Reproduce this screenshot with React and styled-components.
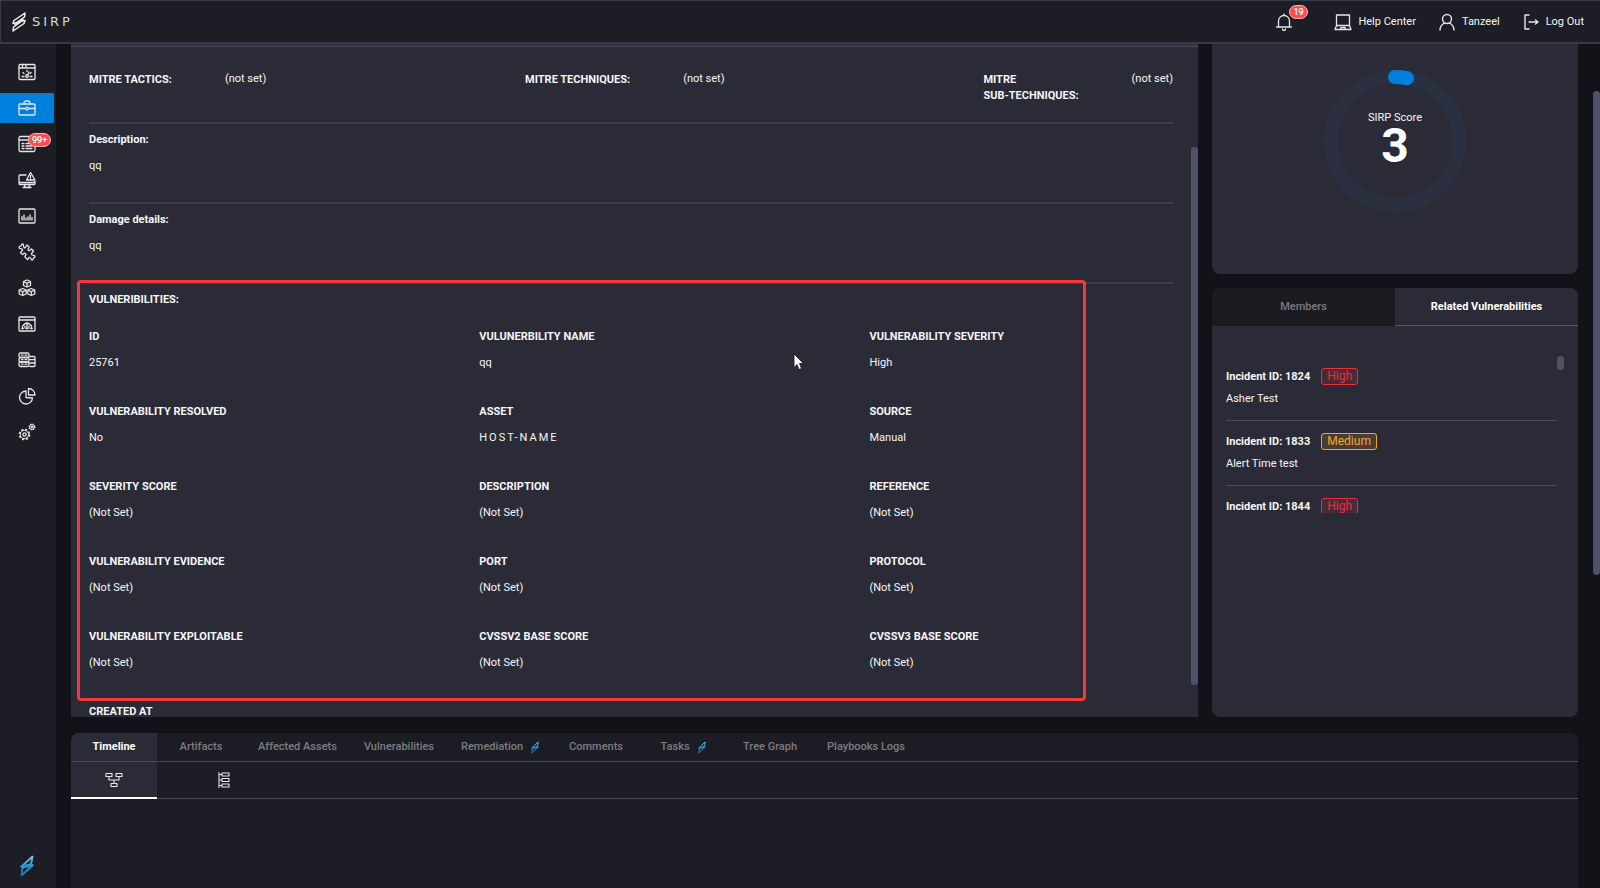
import React, { useState } from 'react';
import styled, { createGlobalStyle } from 'styled-components';

const GlobalStyle = createGlobalStyle`
  * {
    box-sizing: border-box;
  }
  body {
    margin: 0;
    background: #121318;
    color: #f6f6f8;
    font-family: Roboto, "Liberation Sans", sans-serif;
    font-size: 11px;
    line-height: 16px;
    overflow: hidden;
  }
  button {
    font: inherit;
    color: inherit;
    background: none;
    border: 0;
    padding: 0;
    cursor: pointer;
  }
  a {
    color: inherit;
    text-decoration: none;
  }
  h2, h3, p, dl, dd, ul {
    margin: 0;
    padding: 0;
  }
`;

const Page = styled.div`
  display: flex;
  flex-direction: column;
  height: 100vh;
`;

const Header = styled.header`
  display: flex;
  align-items: center;
  justify-content: space-between;
  height: 44px;
  padding: 0 16px 0 11px;
  background: #1c1d25;
  border: 1px solid #3a3a46;
  border-bottom-width: 2px;
  border-right: 0;
`;

const Brand = styled.a`
  display: flex;
  align-items: center;
  gap: 6px;
  font-family: "DejaVu Sans", sans-serif;
  font-size: 13px;
  letter-spacing: 3px;
  color: #d6d6da;
`;

const HeaderNav = styled.nav`
  display: flex;
  align-items: center;
  gap: 22px;
`;

const HeaderLink = styled.a`
  position: relative;
  display: flex;
  align-items: center;
  gap: 6px;
`;

const Bell = styled(HeaderLink)`
  margin-right: 19px;
`;

const Badge = styled.span`
  position: absolute;
  top: ${props => props.$top}px;
  left: ${props => props.$left}px;
  padding: 0 3px;
  border: 1px solid #ffb3b3;
  border-radius: 8px;
  background: #ff4d4f;
  color: #fff;
  font-size: 9px;
  font-weight: 500;
  line-height: 12px;
`;

const Body = styled.div`
  display: flex;
  flex: 1;
  min-height: 0;
`;

const Sidebar = styled.nav`
  display: flex;
  flex-direction: column;
  flex: none;
  width: 56px;
  padding: 13px 2px 11px 0;
  background: #1c1d25;
`;

const SideLink = styled.a`
  position: relative;
  display: flex;
  align-items: center;
  justify-content: center;
  height: 30px;
  margin-bottom: 6px;
  background: ${props => (props.$active ? '#0080dc' : 'transparent')};
`;

const SideFooter = styled.a`
  display: flex;
  justify-content: center;
  margin-top: auto;
`;

const Content = styled.main`
  display: flex;
  flex-direction: column;
  flex: 1;
  min-width: 0;
  gap: 16px;
  padding: 0 15px;
`;

const Columns = styled.div`
  display: flex;
  gap: 14px;
  height: 673px;
`;

const Details = styled.section`
  display: flex;
  flex: 1;
  min-width: 0;
  background: #2b2b37;
  border-top: 2px solid #353443;
  box-shadow: inset 0 1px #4a495d;
  overflow: hidden;
`;

const DetailsBody = styled.div`
  flex: 1;
  min-width: 0;
  padding: 0 18px;
`;

const ScrollThumb = styled.div`
  flex: none;
  width: 7px;
  height: ${props => props.$height}px;
  margin-top: ${props => props.$top}px;
  border-radius: 4px;
  background: #51506a;
`;

const MitreRow = styled.dl`
  display: flex;
  justify-content: space-between;
  height: 78px;
  padding-top: 25px;
  border-bottom: 2px solid #3c3b4b;
`;

const MitreItem = styled.div`
  display: flex;
  gap: 53px;
`;

const Term = styled.dt`
  padding-top: 1px;
  font-weight: 700;
`;

const Value = styled.dd`
  white-space: nowrap;
`;

const TextBlock = styled.section`
  height: 80px;
  padding-top: 8px;
  border-bottom: 2px solid #3c3b4b;
`;

const BlockTitle = styled.h3`
  margin-bottom: 10px;
  font-size: 11px;
  line-height: 16px;
  font-weight: 700;
`;

const Vulnerabilities = styled.section`
  position: relative;
  padding-top: 8px;
`;

const Highlight = styled.div`
  position: absolute;
  inset: -4px 87px auto -12px;
  height: 421px;
  border: 3px solid #f23a3a;
  border-radius: 4px;
  pointer-events: none;
`;

const FieldsTitle = styled.h2`
  margin-bottom: 21px;
  font-size: 11px;
  line-height: 16px;
  font-weight: 700;
`;

const Fields = styled.dl`
  display: grid;
  grid-template-columns: 36% 36% 28%;
  grid-auto-rows: 75px;
`;

const FieldTerm = styled.dt`
  margin-bottom: 10px;
  font-weight: 700;
`;

const FieldValue = styled.dd`
  letter-spacing: ${props => (props.$spaced ? '2px' : 'normal')};
`;

const Pointer = styled.svg`
  position: absolute;
  top: 69px;
  left: 704px;
`;

const Aside = styled.aside`
  display: flex;
  flex-direction: column;
  flex: none;
  gap: 14px;
  width: 366px;
`;

const ScoreCard = styled.section`
  display: flex;
  justify-content: center;
  height: 230px;
  padding-top: 25px;
  border-radius: 0 0 8px 8px;
  background: #2b2b37;
`;

const Gauge = styled.div`
  position: relative;
  width: 144px;
  height: 144px;
`;

const GaugeText = styled.div`
  position: absolute;
  inset: 0;
  display: flex;
  flex-direction: column;
  align-items: center;
  padding-top: 41px;
`;

const GaugeValue = styled.strong`
  font-size: 48px;
  line-height: 40px;
  font-weight: 700;
  color: #fff;
`;

const RelatedCard = styled.section`
  flex: 1;
  border-radius: 8px;
  background: #2b2b37;
  overflow: hidden;
`;

const RelatedTabs = styled.div`
  display: flex;
  height: 38px;
`;

const RelatedTab = styled.button`
  flex: 1;
  font-weight: ${props => (props.$active ? 700 : 500)};
  color: ${props => (props.$active ? '#fff' : '#7c7c80')};
  background: ${props => (props.$active ? '#2b2b37' : '#1b1b22')};
  border-bottom: 1px solid ${props => (props.$active ? '#55546a' : '#1b1b22')};
`;

const ListWrap = styled.div`
  display: flex;
  height: 157px;
  margin: 30px 14px 0;
  overflow: hidden;
`;

const IncidentList = styled.ul`
  flex: 1;
  padding-top: 12px;
  list-style: none;
`;

const Incident = styled.li`
  height: 65px;
  border-bottom: 1px solid #4b4a5e;
  & + & {
    padding-top: 12px;
  }
  &:first-child {
    height: 53px;
  }
`;

const IncidentHead = styled.div`
  display: flex;
  align-items: center;
  gap: 11px;
  margin-bottom: 6px;
  font-weight: 700;
`;

const levelColors = {
  High: '240, 44, 60',
  Medium: '245, 166, 35',
};

const Level = styled.span`
  padding: 0 5px;
  border: 1px solid rgb(${props => levelColors[props.$level]});
  border-radius: 3px;
  background: rgba(${props => levelColors[props.$level]}, 0.15);
  color: rgb(${props => levelColors[props.$level]});
  font-size: 12px;
  font-weight: 400;
  line-height: 15px;
`;

const BottomPanel = styled.section`
  flex: 1;
  min-height: 0;
  border-radius: 8px 8px 0 0;
  background: #1c1c25;
  overflow: hidden;
`;

const Tabs = styled.div`
  display: flex;
  height: 29px;
  border-bottom: 1px solid #4b4a5c;
`;

const Tab = styled.button`
  display: flex;
  align-items: center;
  justify-content: center;
  gap: 8px;
  min-width: 86px;
  margin-right: 1px;
  padding: 0 13px;
  font-weight: ${props => (props.$active ? 700 : 500)};
  color: ${props => (props.$active ? '#fff' : '#7c7c80')};
  background: ${props => (props.$active ? '#2b2b37' : 'transparent')};
`;

const SubTabs = styled.div`
  display: flex;
  gap: 24px;
  height: 37px;
  border-bottom: 1px solid #4b4a5c;
`;

const SubTab = styled.button`
  display: flex;
  align-items: center;
  justify-content: center;
  width: 86px;
  height: 37px;
  background: ${props => (props.$active ? '#2b2b37' : 'transparent')};
  border-bottom: 2px solid ${props => (props.$active ? '#fff' : 'transparent')};
`;

const PageScroll = styled.div`
  flex: none;
  width: 7px;
`;

function Icon({ children, stroke = 1.3 }) {
  return (
    <svg width="18" height="18" viewBox="0 0 18 18" fill="none" stroke="#e6e6ea" strokeWidth={stroke} strokeLinejoin="round" strokeLinecap="round" aria-hidden="true">
      {children}
    </svg>
  );
}

function Bolt({ width, height, id }) {
  return (
    <svg width={width} height={height} viewBox="0 0 14 22" aria-hidden="true">
      <defs>
        <linearGradient id={id} gradientUnits="userSpaceOnUse" x1="0" y1="0" x2="0" y2="22">
          <stop offset="0" stopColor="#7fd8e8" />
          <stop offset="0.5" stopColor="#2aa3dc" />
          <stop offset="1" stopColor="#0a72c4" />
        </linearGradient>
      </defs>
      <g fill="none" stroke={`url(#${id})`} strokeWidth="1.7" strokeLinejoin="round">
        <path d="M12.500 1.500 L1 12 H8 L11.500 7.500 Z" />
        <path d="M1.500 20.500 L13 10 H6 L2 14.500 Z" />
      </g>
    </svg>
  );
}

function BrandMark() {
  return (
    <svg width="14" height="20" viewBox="0 0 14 20" fill="none" stroke="#f0f0f2" strokeWidth="1.5" strokeLinejoin="round" aria-hidden="true">
      <path d="M13 1 L2 8.500 L1 11.500 L4 11 L12.500 5 Z" />
      <path d="M2.500 13 L11.500 6.800" />
      <path d="M1 19 L12 11.500 L13 8.500 L10 9 L1.500 15 Z" />
    </svg>
  );
}

const sideItems = [
  {
    name: 'Dashboard',
    icon: (
      <>
        <rect x="1" y="1.500" width="16" height="15" rx="1" />
        <path d="M1 5 H17 M4.500 1.500 V5 M8 1.500 V5" />
        <path d="M4 13.500 H6 M12 13.500 H14 M5 9.500 l1 1 M13 9.500 l-1 1 M9 7.500 v1" />
        <circle cx="9" cy="13" r="1.300" />
        <path d="M9.500 12 L11 9" />
      </>
    ),
  },
  {
    name: 'Incidents',
    active: true,
    icon: (
      <>
        <rect x="1" y="5" width="16" height="11" rx="1" />
        <path d="M6 5 V4 a2 2 0 0 1 2-2 h2 a2 2 0 0 1 2 2 V5 M1 9.500 H7.500 M10.500 9.500 H17" />
        <circle cx="9" cy="9.500" r="1.400" />
      </>
    ),
  },
  {
    name: 'Alerts',
    badge: '99+',
    icon: (
      <>
        <rect x="1" y="1.500" width="16" height="15" rx="1.500" />
        <path d="M1 5 H17 M4 8.500 H6 M8 8.500 H14 M4 11 H6 M8 11 H14 M4 13.500 H6 M8 13.500 H14" />
      </>
    ),
  },
  {
    name: 'Threats',
    icon: (
      <>
        <path d="M8 4 H2 a1 1 0 0 0-1 1 V12.500 a1 1 0 0 0 1 1 H16 a1 1 0 0 0 1-1 V10.500 M1 11.500 H17" />
        <path d="M7 13.500 L6.500 16 M11 13.500 L11.500 16 M5 16.500 H13" />
        <path d="M12.500 1.500 L8.500 9 H17 Z M12.500 4.500 V6.500 M12.500 7.700 V7.800" />
      </>
    ),
  },
  {
    name: 'Reports',
    icon: (
      <>
        <rect x="1" y="2" width="16" height="14" rx="1" />
        <path d="M4 13 V9.500 M6 13 V8 M8 13 V11 M10 13 V10 M12 13 V8 M14 13 V10.500" />
      </>
    ),
  },
  {
    name: 'Integrations',
    icon: (
      <path d="M6.500 5 C4.500 3.500 6.500 1 4.500 1 C3 1 3.500 2.500 3 3 C2 3.300 1 3 1 4.500 C1 6.500 3.500 5 4.500 6.500 C5 8 2.500 9 2.500 9.500 L4.500 11.500 C5.500 11.500 5.500 9.500 7.500 10.500 C9 12 6.500 13 7 14 L9.500 16.500 C10.500 16.500 10 14 12 14.500 C13.500 15 12.500 17 14 17 C15.500 17 15 15.500 15.500 15 C16 14.500 17 15 17 13.500 C17 11.500 14.500 13 13.500 11.500 C13 10 15.500 9 15.500 8 L13.500 6 C12.500 6 12.500 8.500 10.500 7.500 C9 6 11.500 5 11 4 L9 2 C8 2 8.500 5 6.500 5 Z" />
    ),
  },
  {
    name: 'Assets',
    icon: (
      <>
        <path d="M9 1 L12.500 2.500 V6.500 L9 8 L5.500 6.500 V2.500 Z M5.500 2.500 L9 4.300 L12.500 2.500 M9 4.300 V8" />
        <path d="M4.700 9.500 L8.200 11 V15 L4.700 16.500 L1.200 15 V11 Z M1.200 11 L4.700 12.800 L8.200 11 M4.700 12.800 V16.500" />
        <path d="M13.300 9.500 L16.800 11 V15 L13.300 16.500 L9.800 15 V11 Z M9.800 11 L13.300 12.800 L16.800 11 M13.300 12.800 V16.500" />
      </>
    ),
  },
  {
    name: 'Organization',
    icon: (
      <>
        <rect x="1" y="2" width="16" height="14" rx="1" />
        <path d="M1 5 H17 M9 7.500 V13.500 M4.500 13.500 V11 L7 8.500 H11 L13.500 11 V13.500 M7 11 V13" />
        <path d="M11 11 V13 M3.800 13.500 H5.300 M8.200 13.500 H9.800 M12.700 13.500 H14.200" />
      </>
    ),
  },
  {
    name: 'Servers',
    icon: (
      <>
        <rect x="1" y="2" width="10" height="4.500" rx="1.500" />
        <rect x="1" y="6.500" width="10" height="4.500" rx="1.500" />
        <rect x="1" y="11" width="10" height="4.500" rx="1.500" />
        <path d="M3.500 4.200 H5 M3.500 8.700 H5 M3.500 13.200 H5 M7 4.200 H9 M7 8.700 H9 M7 13.200 H9" />
        <path d="M11.500 5.500 H16 a1 1 0 0 1 1 1 V14.500 a1 1 0 0 1-1 1 H12 M11.500 8.700 H17 M11.500 12 H17" />
      </>
    ),
  },
  {
    name: 'Analytics',
    icon: (
      <>
        <path d="M8 4 A6.500 6.500 0 1 0 14.500 11 L8 10.500 Z" />
        <path d="M10.500 1.500 A6.500 6.500 0 0 1 17 8 L10.500 8 Z" />
      </>
    ),
  },
  {
    name: 'Settings',
    icon: (
      <>
        <circle cx="6.500" cy="11.500" r="5" strokeWidth="1.600" strokeDasharray="2.200 1.730" strokeLinecap="butt" />
        <circle cx="6.500" cy="11.500" r="4.100" strokeWidth="1" />
        <circle cx="6.500" cy="11.500" r="1.600" />
        <circle cx="14" cy="4" r="2.900" strokeWidth="1.200" strokeDasharray="1.300 0.977" strokeLinecap="butt" />
        <circle cx="14" cy="4" r="2.300" strokeWidth="1" />
        <circle cx="14" cy="4" r="0.500" />
      </>
    ),
  },
];

const mitre = [
  ['MITRE TACTICS:'],
  ['MITRE TECHNIQUES:'],
  ['MITRE', 'SUB-TECHNIQUES:'],
];

const fields = [
  ['ID', '25761'],
  ['VULUNERBILITY NAME', 'qq'],
  ['VULNERABILITY SEVERITY', 'High'],
  ['VULNERABILITY RESOLVED', 'No'],
  ['ASSET', 'HOST-NAME'],
  ['SOURCE', 'Manual'],
  ['SEVERITY SCORE', '(Not Set)'],
  ['DESCRIPTION', '(Not Set)'],
  ['REFERENCE', '(Not Set)'],
  ['VULNERABILITY EVIDENCE', '(Not Set)'],
  ['PORT', '(Not Set)'],
  ['PROTOCOL', '(Not Set)'],
  ['VULNERABILITY EXPLOITABLE', '(Not Set)'],
  ['CVSSV2 BASE SCORE', '(Not Set)'],
  ['CVSSV3 BASE SCORE', '(Not Set)'],
  ['CREATED AT', ''],
];

const incidents = [
  { id: 1824, level: 'High', title: 'Asher Test' },
  { id: 1833, level: 'Medium', title: 'Alert Time test' },
  { id: 1844, level: 'High', title: '' },
];

const tabs = ['Timeline', 'Artifacts', 'Affected Assets', 'Vulnerabilities', 'Remediation', 'Comments', 'Tasks', 'Tree Graph', 'Playbooks Logs'];
const boltTabs = ['Remediation', 'Tasks'];

function TopBar() {
  return (
    <Header>
      <Brand href="#home">
        <BrandMark />
        SIRP
      </Brand>
      <HeaderNav>
        <Bell href="#notifications" aria-label="Notifications">
          <Icon>
            <path d="M9 1 V2.500 M3.500 13.500 V8 a5.500 5.500 0 0 1 11 0 V13.500 M1.500 14 H16.500" />
            <path d="M7.500 16 a1.500 1.500 0 0 0 3 0" />
          </Icon>
          <Badge $top={-8} $left={14}>19</Badge>
        </Bell>
        <HeaderLink href="#help">
          <Icon>
            <rect x="2.500" y="2" width="13" height="10.500" />
            <path d="M2.500 12.500 L1 16.500 H17 L15.500 12.500 M6.500 16 L7 14.500 H11 L11.500 16" />
          </Icon>
          Help Center
        </HeaderLink>
        <HeaderLink href="#profile">
          <Icon stroke={1.4}>
            <circle cx="9" cy="6" r="4.500" />
            <path d="M2 17 C2 13 4 11.500 6.500 10 M16 17 C16 13 14 11.500 11.500 10" />
          </Icon>
          Tanzeel
        </HeaderLink>
        <HeaderLink href="#logout">
          <Icon stroke={1.4}>
            <path d="M7 2 H3 V16 H7 M7 9 H16 M13.500 7 L16 9 L13.500 11" />
          </Icon>
          Log Out
        </HeaderLink>
      </HeaderNav>
    </Header>
  );
}

function SideNav() {
  return (
    <Sidebar>
      {sideItems.map(item => (
        <SideLink key={item.name} href={`#${item.name.toLowerCase()}`} aria-label={item.name} $active={item.active}>
          <Icon>{item.icon}</Icon>
          {item.badge && <Badge $top={4} $left={28}>{item.badge}</Badge>}
        </SideLink>
      ))}
      <SideFooter href="#sirp" aria-label="About">
        <Bolt id="foot" width={14} height={22} />
      </SideFooter>
    </Sidebar>
  );
}

function IncidentDetails() {
  return (
    <Details>
      <DetailsBody>
        <MitreRow>
          {mitre.map(lines => (
            <MitreItem key={lines.join(' ')}>
              <Term>
                {lines.map(line => <div key={line}>{line}</div>)}
              </Term>
              <Value>(not set)</Value>
            </MitreItem>
          ))}
        </MitreRow>
        <TextBlock>
          <BlockTitle>Description:</BlockTitle>
          <p>qq</p>
        </TextBlock>
        <TextBlock>
          <BlockTitle>Damage details:</BlockTitle>
          <p>qq</p>
        </TextBlock>
        <Vulnerabilities>
          <FieldsTitle>VULNERIBILITIES:</FieldsTitle>
          <Fields>
            {fields.map(([term, value]) => (
              <div key={term}>
                <FieldTerm>{term}</FieldTerm>
                <FieldValue $spaced={term === 'ASSET'}>{value}</FieldValue>
              </div>
            ))}
          </Fields>
          <Highlight />
          <Pointer width="12" height="18" viewBox="0 0 12 18" aria-hidden="true">
            <path d="M1 1 V14.500 L4 11.500 L6 16.500 L8.500 15.500 L6.500 10.500 H10.500 Z" fill="#fff" stroke="#15151b" strokeWidth="0.800" />
          </Pointer>
        </Vulnerabilities>
      </DetailsBody>
      <ScrollThumb $height={538} $top={101} />
    </Details>
  );
}

function Score({ value }) {
  const circumference = 2 * Math.PI * 64;
  return (
    <ScoreCard>
      <Gauge>
        <svg width="144" height="144" viewBox="0 0 144 144" fill="none" strokeWidth="14" aria-hidden="true">
          <circle cx="72" cy="72" r="64" stroke="#2a3040" />
          <circle cx="72" cy="72" r="64" stroke="#0080dc" strokeLinecap="round" strokeDasharray={`${circumference * value / 100} ${circumference}`} transform="rotate(-90 72 72)" />
        </svg>
        <GaugeText>
          <span>SIRP Score</span>
          <GaugeValue>{value}</GaugeValue>
        </GaugeText>
      </Gauge>
    </ScoreCard>
  );
}

function Related() {
  const [tab, setTab] = useState('Related Vulnerabilities');
  return (
    <RelatedCard>
      <RelatedTabs>
        {['Members', 'Related Vulnerabilities'].map(name => (
          <RelatedTab key={name} $active={tab === name} onClick={() => setTab(name)}>{name}</RelatedTab>
        ))}
      </RelatedTabs>
      <ListWrap>
        <IncidentList>
          {incidents.map(item => (
            <Incident key={item.id}>
              <IncidentHead>
                Incident ID: {item.id}
                <Level $level={item.level}>{item.level}</Level>
              </IncidentHead>
              <p>{item.title}</p>
            </Incident>
          ))}
        </IncidentList>
        <ScrollThumb $height={14} $top={0} />
      </ListWrap>
    </RelatedCard>
  );
}

function Activity() {
  const [tab, setTab] = useState('Timeline');
  return (
    <BottomPanel>
      <Tabs>
        {tabs.map(name => (
          <Tab key={name} $active={tab === name} onClick={() => setTab(name)}>
            {name}
            {boltTabs.includes(name) && <Bolt id={`tab-${name}`} width={8} height={13} />}
          </Tab>
        ))}
      </Tabs>
      <SubTabs>
        <SubTab $active aria-label="Flow view">
          <Icon stroke={1.1}>
            <path d="M1 2.500 H7 V5.500 H1 Z M11 2.500 H17 V5.500 H11 Z M6 12.500 H12 V15.500 H6 Z M4 5.500 V9 H14 V5.500 M9 9 V12.500" />
          </Icon>
        </SubTab>
        <SubTab aria-label="List view">
          <Icon stroke={1.1}>
            <path d="M4 1.500 V16.500 M4 3.500 H7 M4 9 H7 M4 14.500 H7 M7 2 H14 V5 H7 Z M7 7.500 H14 V10.500 H7 Z M7 13 H14 V16 H7 Z" />
          </Icon>
        </SubTab>
      </SubTabs>
    </BottomPanel>
  );
}

function App() {
  return (
    <Page>
      <GlobalStyle />
      <TopBar />
      <Body>
        <SideNav />
        <Content>
          <Columns>
            <IncidentDetails />
            <Aside>
              <Score value={3} />
              <Related />
            </Aside>
          </Columns>
          <Activity />
        </Content>
        <PageScroll>
          <ScrollThumb $height={484} $top={47} />
        </PageScroll>
      </Body>
    </Page>
  );
}

export default App;
